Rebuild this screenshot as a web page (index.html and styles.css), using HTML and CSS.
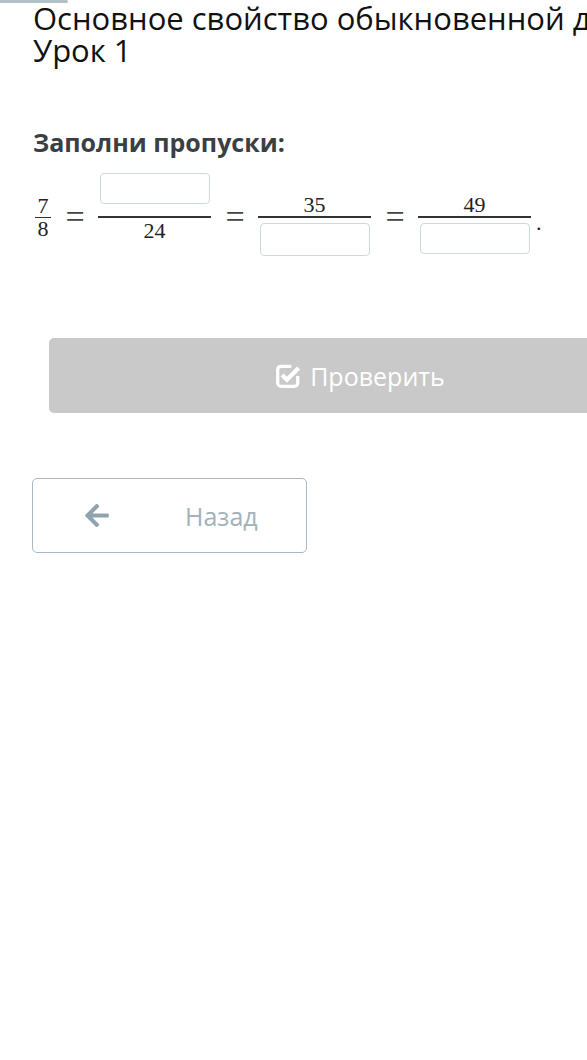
FILE: index.html
```html
<!DOCTYPE html>
<html lang="ru">
<head>
    <meta charset="UTF-8">
    <meta name="viewport" content="width=device-width, initial-scale=1.0">
    <title>Урок 1</title>
    <link rel="stylesheet" href="styles.css">
</head>
<body>
    <div class="progress"></div>
    <div class="page">
        <h1 class="title">Основное свойство обыкновенной дроби.<br>Урок 1</h1>

        <h3 class="task">Заполни пропуски:</h3>

        <div class="math">
            <span class="frac small">
                <span class="num">7</span>
                <span class="bar"></span>
                <span class="den">8</span>
            </span>
            <span class="eq">=</span>
            <span class="frac">
                <span class="num"><input class="blank" type="text"></span>
                <span class="bar"></span>
                <span class="den">24</span>
            </span>
            <span class="eq">=</span>
            <span class="frac">
                <span class="num">35</span>
                <span class="bar"></span>
                <span class="den"><input class="blank tall" type="text"></span>
            </span>
            <span class="eq">=</span>
            <span class="frac">
                <span class="num">49</span>
                <span class="bar"></span>
                <span class="den"><input class="blank" type="text"></span>
            </span>
            <span class="dot">.</span>
        </div>

        <button class="check-btn" disabled>
            <svg class="check-icon" viewBox="0 0 24 24" width="26" height="26">
                <path d="M15 3H5.5a3 3 0 0 0-3 3v12.5a3 3 0 0 0 3 3H18a3 3 0 0 0 3-3V12" fill="none" stroke="#fff" stroke-width="3"/>
                <path d="M6.5 11l4.5 4.5L21.8 4.6" fill="none" stroke="#fff" stroke-width="4"/>
            </svg>
            Проверить
        </button>

        <button class="back-btn">
            <svg class="back-icon" viewBox="0 0 448 512" width="24" height="27">
                <path fill="#90a4ae" d="M257.5 445.1l-22.2 22.2c-9.4 9.4-24.6 9.4-33.9 0L7 273c-9.4-9.4-9.4-24.6 0-33.9L201.4 44.7c9.4-9.4 24.6-9.4 33.9 0l22.2 22.2c9.5 9.5 9.3 25-.4 34.3L136.6 216H424c13.3 0 24 10.7 24 24v32c0 13.3-10.7 24-24 24H136.6l120.5 114.8c9.8 9.3 10 24.8.4 34.3z"/>
            </svg>
            <span>Назад</span>
        </button>
    </div>
</body>
</html>
```

FILE: styles.css
```css
body {
    margin: 0;
    font-family: "Open Sans", Arial, sans-serif;
    background: #fff;
    overflow-x: hidden;
}
.progress {
    width: 68px;
    height: 3px;
    background-color: #b3c0c7;
    border-radius: 0 3px 3px 0;
}
.page {
    width: 720px;
    padding-left: 33px;
}
.title {
    margin: -1px 0 0;
    font-size: 31px;
    font-weight: 400;
    line-height: 32px;
    color: #111;
    white-space: nowrap;
}
.task {
    margin: 61px 0 0;
    font-size: 25px;
    font-weight: 700;
    line-height: 30px;
    color: #3a3f44;
}
.math {
    display: flex;
    align-items: center;
    margin-top: 15px;
    margin-left: 2px;
    font-family: "Liberation Serif", "DejaVu Serif", serif;
    font-size: 22px;
    color: #222;
}
.frac {
    display: flex;
    flex-direction: column;
    align-items: center;
    width: 113px;
}
.frac .num,
.frac .den {
    height: 44px;
    display: flex;
    justify-content: center;
    line-height: 22px;
    box-sizing: border-box;
}
.frac .num {
    align-items: flex-end;
}
.frac .den {
    align-items: flex-start;
    padding-top: 2px;
}
.frac .num .blank {
    margin-bottom: 12px;
}
.frac .den .blank {
    margin-top: 3px;
}
.bar {
    align-self: stretch;
    height: 2px;
    background-color: #333;
}
.frac.small {
    width: 16px;
}
.frac.small .bar {
    height: 1px;
}
.frac.small .num,
.frac.small .den {
    height: 24px;
    padding: 0;
}
.eq {
    width: 22px;
    margin: 0 12px 0 13px;
    font-size: 34px;
    line-height: 34px;
    text-align: center;
    color: #444;
}
.dot {
    margin-left: 5px;
    margin-top: 12px;
}
.blank {
    width: 110px;
    height: 31px;
    box-sizing: border-box;
    border: 1px solid #cfd9d6;
    border-radius: 4px;
    background: #fff;
    padding: 0;
}
.blank.tall {
    height: 33px;
}
.check-btn {
    display: flex;
    align-items: center;
    justify-content: center;
    gap: 9px;
    width: 622px;
    height: 75px;
    margin: 76px 0 0 16px;
    border: none;
    border-radius: 5px;
    background-color: #c9c9c9;
    color: #fff;
    font-family: "Open Sans", Arial, sans-serif;
    font-size: 25px;
}
.back-btn {
    display: flex;
    align-items: center;
    width: 275px;
    height: 75px;
    margin: 65px 0 0 -1px;
    padding: 0 0 0 52px;
    border: 1px solid #a9b9c1;
    border-radius: 5px;
    background: #fff;
    color: #a2b2bb;
    font-family: "Open Sans", Arial, sans-serif;
    font-size: 25px;
    cursor: pointer;
}
.back-btn span {
    margin-left: 76px;
}
```
